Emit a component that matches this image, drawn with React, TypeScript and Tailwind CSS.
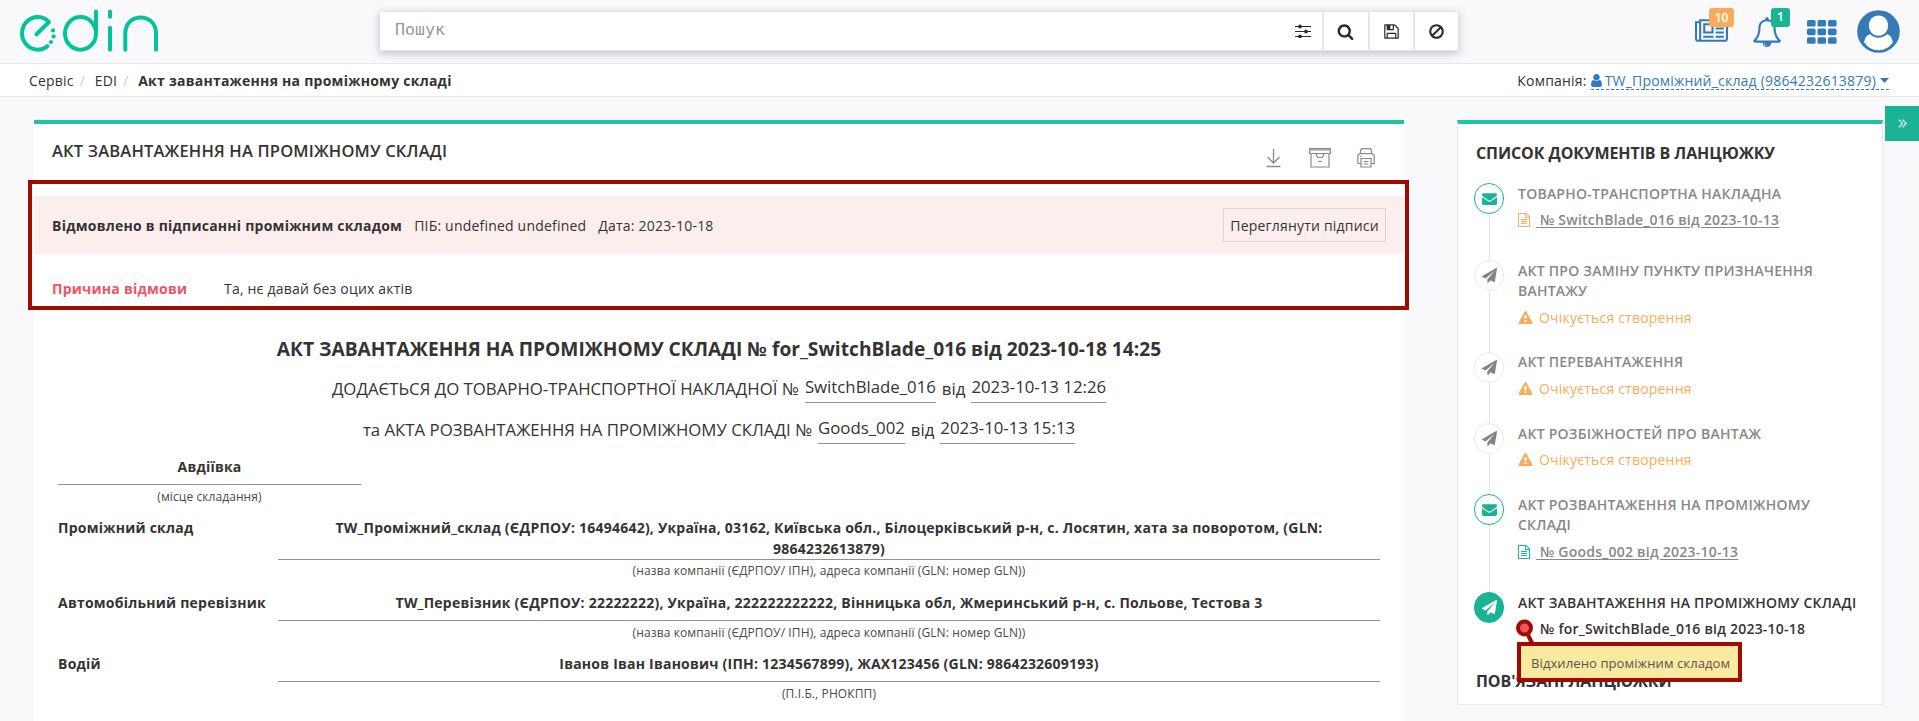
import React from 'react';

const PATHS = {
  user: 'M1536 1399q0 109-62.5 187t-150.5 78h-854q-88 0-150.5-78t-62.5-187q0-85 8.5-160.5t31.5-152 58.5-131 94-89 134.5-34.5q131 128 313 128t313-128q76 0 134.5 34.5t94 89 58.5 131 31.5 152 8.5 160.5zm-256-887q0 159-112.5 271.5t-271.5 112.5-271.5-112.5-112.5-271.5 112.5-271.5 271.5-112.5 271.5 112.5 112.5 271.5z',
  plane: 'M1764 11q33 24 27 64l-256 1536q-5 29-32 45-14 8-31 8-11 0-24-5l-453-185-242 295q-18 23-49 23-13 0-22-4-19-7-30.5-23.5t-11.5-36.5v-349l864-1059-1069 925-395-162q-37-14-40-55-2-40 32-59l1664-960q15-9 32-9 20 0 36 11z',
  envelope: 'M1792 710v794q0 66-47 113t-113 47h-1472q-66 0-113-47t-47-113v-794q44 49 101 87 362 246 497 345 57 42 92.5 65.5t94.5 48 110 24.5h2q51 0 110-24.5t94.5-48 92.5-65.5q170-123 498-345 57-39 100-87zm0-294q0 79-49 151t-122 123q-376 261-468 325-10 7-42.5 31t-54 38.5-52 32.5-57.5 27-50 9h-2q-23 0-50-9t-57.5-27-52-32.5-54-38.5-42.5-31q-91-64-262-182.5t-205-142.5q-62-42-117-115.5t-55-136.5q0-78 41.5-130t118.5-52h1472q65 0 112.5 47t47.5 113z',
  warning: 'M1024 1375v-190q0-14-9.5-23.5t-22.5-9.5h-192q-13 0-22.5 9.5t-9.5 23.5v190q0 14 9.5 23.5t22.5 9.5h192q13 0 22.5-9.5t9.5-23.5zm-2-374l18-459q0-12-10-19-13-11-24-11h-220q-11 0-24 11-10 7-10 21l17 457q0 10 10 16.5t24 6.5h185q14 0 23.5-6.5t10.5-16.5zm-14-934l768 1408q35 63-2 126-17 29-46.5 46t-63.5 17h-1536q-34 0-63.5-17t-46.5-46q-37-63-2-126l768-1408q17-31 47-49t65-18 65 18 47 49z',
  file: 'M1596 380q28 28 48 76t20 88v1152q0 40-28 68t-68 28h-1344q-40 0-68-28t-28-68v-1600q0-40 28-68t68-28h896q40 0 88 20t76 48zm-444-244v376h376q-10-29-22-41l-313-313q-12-12-41-22zm384 1528v-1024h-416q-40 0-68-28t-28-68v-416h-768v1536h1280zm-1024-864q0-14 9-23t23-9h704q14 0 23 9t9 23v64q0 14-9 23t-23 9h-704q-14 0-23-9t-9-23v-64zm736 224q14 0 23 9t9 23v64q0 14-9 23t-23 9h-704q-14 0-23-9t-9-23v-64q0-14 9-23t23-9h704zm0 256q14 0 23 9t9 23v64q0 14-9 23t-23 9h-704q-14 0-23-9t-9-23v-64q0-14 9-23t23-9h704z',
  floppy: 'M512 1536h768v-384h-768v384zm896 0h128v-896q0-14-10-38.5t-20-34.5l-281-281q-10-10-34-20t-39-10v416q0 40-28 68t-68 28h-576q-40 0-68-28t-28-68v-416h-128v1280h128v-416q0-40 28-68t68-28h832q40 0 68 28t28 68v416zm-384-928v-320q0-13-9.5-22.5t-22.5-9.5h-192q-13 0-22.5 9.5t-9.5 22.5v320q0 13 9.5 22.5t22.5 9.5h192q13 0 22.5-9.5t9.5-22.5zm640 32v928q0 40-28 68t-68 28h-1344q-40 0-68-28t-28-68v-1344q0-40 28-68t68-28h928q40 0 88 20t76 48l280 280q28 28 48 76t20 88z',
  search: 'M1216 832q0-185-131.5-316.5t-316.5-131.5-316.5 131.5-131.5 316.5 131.5 316.5 316.5 131.5 316.5-131.5 131.5-316.5zm512 832q0 52-38 90t-90 38q-54 0-90-38l-343-342q-179 124-399 124-143 0-273.5-55.5t-225-150-150-225-55.5-273.5 55.5-273.5 150-225 225-150 273.5-55.5 273.5 55.5 225 150 150 225 55.5 273.5q0 220-124 399l343 343q37 37 37 90z',
  ban: 'M1440 893q0-161-87-295l-754 753q137 89 297 89 111 0 211.5-43.5t173.5-116.5 116-174.5 43-212.5zm-999 299l755-754q-135-91-300-91-148 0-273 73t-198 199-73 274q0 162 89 299zm1223-299q0 157-61 300t-163.5 246-245 164-298.5 61-298.5-61-245-164-163.5-246-61-300 61-299.5 163.5-245.5 245-164 298.5-61 298.5 61 245 164 163.5 245.5 61 299.5z',
  newspaper: 'M1024 512h-384v384h384v-384zm128 640v128h-640v-128h640zm0-768v640h-640v-640h640zm640 768v128h-512v-128h512zm0-256v128h-512v-128h512zm0-256v128h-512v-128h512zm0-256v128h-512v-128h512zm-1536 960v-960h-128v960q0 26 19 45t45 19 45-19 19-45zm1664 0v-1088h-1536v1088q0 33-11 64h1483q26 0 45-19t19-45zm128-1216v1216q0 80-56 136t-136 56h-1664q-80 0-136-56t-56-136v-1088h256v-128h1792z',
  bell: 'M912 1696q0-16-16-16-59 0-101.5-42.5t-42.5-101.5q0-16-16-16t-16 16q0 73 51.5 124.5t124.5 51.5q16 0 16-16zm-666-288h1300q-266-300-266-832 0-51-24-105t-69-103-121.5-80.5-169.5-31.5-169.5 31.5-121.5 80.5-69 103-24 105q0 532-266 832zm1482 0q0 52-38 90t-90 38h-448q0 106-75 181t-181 75-181-75-75-181h-448q-52 0-90-38t-38-90q50-42 91-88t85-119.5 74.5-158.5 50-206 19.5-260q0-152 117-282.5t307-158.5q-8-19-8-39 0-40 28-68t68-28 68 28 28 68q0 20-8 39 190 28 307 158.5t117 282.5q0 139 19.5 260t50 206 74.5 158.5 85 119.5 91 88z',
};

function Icon({ name, className, viewBox = '0 0 1792 1792' }: { name: keyof typeof PATHS; className: string; viewBox?: string }) {
  return (
    <svg viewBox={viewBox} className={`shrink-0 fill-current ${className}`}>
      <path d={PATHS[name]} />
    </svg>
  );
}

function Logo() {
  return (
    <svg viewBox="0 0 160 64" className="h-[64px] w-[160px] shrink-0 fill-none stroke-[#00c59b] stroke-4" strokeLinecap="round" strokeLinejoin="round">
      <path d="M36.5 34.3L49 22A15.7 16.3 0 1 0 47.4 46.2" />
      <g className="fill-[#00c59b] stroke-none">
        <circle cx="53" cy="30.4" r="2.1" />
        <circle cx="53.6" cy="36.4" r="2.1" />
        <circle cx="51" cy="42" r="2.1" />
      </g>
      <ellipse cx="80.5" cy="33.4" rx="15.5" ry="16.3" />
      <path d="M96 11.5V33M110 11.5V16.8M110 27.8V49.8M125.3 49.8V33.5C125.3 12 156 12 156 33.5V49.8" />
    </svg>
  );
}

function Header() {
  return (
    <header className="flex h-[64px] items-center border-b border-[#e5e6e9] bg-[#f9f9fb]">
      <Logo />
      <div className="ml-[220px] flex h-[39px] w-[1078px] shrink-0 border-b border-[#e5e6e7] bg-white text-[#2b2b2b] shadow-[0_2px_8px_1px_rgba(60,70,110,0.28)]">
        <input
          placeholder="Пошук"
          className="min-w-0 flex-1 bg-transparent pb-[2px] pl-[15px] font-['DejaVu_Sans_Mono',monospace] text-[16.6px] outline-none placeholder:text-[#999]"
        />
        <div className="flex w-[38px] items-center justify-center">
          <svg viewBox="0 0 16 14" className="h-[14px] w-[16px] fill-none stroke-current">
            <path d="M0 2.5H16M0 7.5H16M0 12.5H16" strokeWidth="1.2" />
            <path d="M5 0.8V4.2M11 5.8V9.2M5 10.8V14" strokeWidth="3" />
          </svg>
        </div>
        <button className="flex w-[46px] items-center justify-center border-l-2 border-[#e5e6e7] pr-px">
          <Icon name="search" className="h-[17px] w-[17px]" />
        </button>
        <button className="flex w-[45px] items-center justify-center border-l-2 border-[#e5e6e7]">
          <Icon name="floppy" className="h-[17px] w-[17px]" />
        </button>
        <button className="flex w-[45px] items-center justify-center border-l-2 border-[#e5e6e7]">
          <Icon name="ban" className="h-[17px] w-[17px]" />
        </button>
      </div>
      <nav className="ml-auto flex h-full items-center pr-[19px] text-[#337ab7]">
        <div className="relative">
          <Icon name="newspaper" viewBox="0 0 2048 1792" className="h-[29px] w-[33px]" />
          <span className="absolute -top-[9px] left-[14px] flex h-[19px] w-[25px] items-center justify-center rounded-[3px] bg-[#f8ac59] text-xs font-semibold text-white">10</span>
        </div>
        <div className="relative ml-[24px]">
          <Icon name="bell" className="h-[30px] w-[30px]" />
          <span className="absolute -top-[9px] left-[19px] flex h-[19px] w-[19px] items-center justify-center rounded-[3px] bg-[#1ab394] text-xs font-semibold text-white">1</span>
        </div>
        <svg viewBox="0 0 30 24" className="ml-[25px] h-[24px] w-[30px] fill-current">
          {[0, 8.6, 17.2].map((y) =>
            [0, 10.5, 21].map((x) => <rect key={`${x}-${y}`} x={x} y={y} width="8.6" height="6.6" rx="1.6" />),
          )}
        </svg>
        <svg viewBox="0 0 43 43" className="ml-[20px] h-[43px] w-[43px]">
          <circle cx="21.5" cy="21.5" r="21.3" className="fill-[#337ab7]" />
          <path d="M21.5 5.5c5.6 0 9.6 4.3 9.6 10s-4 10.3-9.6 10.3-9.6-4.6-9.6-10.3 4-10 9.6-10z" className="fill-white" />
          <path d="M13.2 24.2c2.2 2.3 5 3.5 8.3 3.5s6.1-1.2 8.3-3.5c3.8.9 5.5 4.2 6 8.3-3 4.5-8.2 7.7-14.3 7.7s-11.3-3.2-14.3-7.7c.5-4.1 2.2-7.4 6-8.3z" className="fill-white" />
        </svg>
      </nav>
    </header>
  );
}

function Breadcrumbs() {
  return (
    <div className="flex h-[33px] items-center justify-between border-b border-[#e5e6e9] bg-white pt-px pr-[30px] pl-[29px] tracking-[0.2px]">
      <div className="flex whitespace-pre">
        <span>Сервіс</span>
        <span className="w-[21px] pl-[6px] text-[#ccc]">/</span>
        <span>EDI</span>
        <span className="w-[21px] pl-[6px] text-[#ccc]">/</span>
        <span className="font-bold tracking-[0.25px]">Акт завантаження на проміжному складі</span>
      </div>
      <div className="flex items-center">
        <span className="mr-1">Компанія:</span>
        <a className="flex h-[19px] items-center border-b border-dashed border-[#337ab7] text-[#337ab7]">
          <Icon name="user" viewBox="256 128 1280 1536" className="mr-[3px] h-[13px] w-[11px]" />
          TW_Проміжний_склад (9864232613879)
          <svg viewBox="0 0 9 5" className="ml-[4px] h-[5px] w-[9px] fill-current">
            <path d="M0 0H9L4.5 5z" />
          </svg>
        </a>
      </div>
    </div>
  );
}

function ToolIcons() {
  return (
    <div className="flex items-start gap-[26px] pt-[2px] text-[#8a8a8a]">
      <svg viewBox="0 0 16 20" className="mr-px h-[20px] w-[16px] fill-none stroke-current" strokeWidth="1.3">
        <path d="M7.5 1V14.5M1.5 9L7.5 15L13.5 9M0.5 18.5H14.5" />
      </svg>
      <svg viewBox="0 0 22 20" className="h-[20px] w-[22px] fill-none stroke-current" strokeWidth="1.2">
        <path d="M0.7 0.7H21.3V5.5H0.7zM2 5.5V19H20V5.5M0.7 2H21.3M7.5 6V8L9 9.5H13L14.5 8V6M9 13.5H13" />
      </svg>
      <svg viewBox="0 0 18 20" className="h-[20px] w-[18px] fill-none stroke-current" strokeWidth="1.2">
        <path d="M3.5 5.5V2L5 0.7H13L14.5 2V5.5M4 15.5H0.8V7.5L2.5 5.7H15.5L17.2 7.5V15.5H14M4 10.5H14V19H4zM6.5 13.5H11.5M6.5 16H11.5M2.7 8.5H4.5" />
      </svg>
    </div>
  );
}

function Field({ label, value, caption, tall = false }: { label: string; value: string; caption: string; tall?: boolean }) {
  return (
    <div className={`flex ${tall ? 'h-[75px]' : 'h-[61px]'}`}>
      <div className="w-[220px] shrink-0 leading-[21px] font-bold tracking-[0.23px]">{label}</div>
      <div className="flex-1 text-center">
        <div className={`flex justify-center border-b border-[#929396] ${tall ? 'h-[43px]' : 'h-[29px]'}`}>
          <p className="max-w-[1080px] leading-[21px] font-bold tracking-[0.225px]">{value}</p>
        </div>
        <p className={`text-xs leading-[18px] tracking-[0.11px] text-[#4a4a4a] ${tall ? 'pt-[2px]' : 'pt-[3px]'}`}>{caption}</p>
      </div>
    </div>
  );
}

function Underlined({ children }: { children: React.ReactNode }) {
  return <span className="mx-[6px] inline-flex h-[29px] items-start border-b border-[#929396] leading-[26px] last:mr-0">{children}</span>;
}

function DocumentCard() {
  return (
    <main className="h-[601px] w-[1370px] shrink-0 border-t-4 border-[#1fc5a2] bg-white">
      <div className="flex h-[72px] justify-between pt-[22px] pr-[29px] pl-[18px]">
        <h1 className="-mt-[6px] h-[22px] text-[16.5px] leading-[22px] font-semibold tracking-[0.18px]">АКТ ЗАВАНТАЖЕННЯ НА ПРОМІЖНОМУ СКЛАДІ</h1>
        <ToolIcons />
      </div>
      <section className="relative h-[112px] tracking-[0.2px]">
        <div className="pointer-events-none absolute -top-[16px] -right-[5px] -left-[6px] h-[130px] border-4 border-[#a00b00]" />
        <div className="flex h-[58px] items-center bg-[#fdeeee] px-[18px]">
          <span className="font-bold tracking-[0.235px]">Відмовлено в підписанні проміжним складом</span>
          <span className="ml-3">ПІБ: undefined undefined</span>
          <span className="ml-3">Дата: 2023-10-18</span>
          <button className="ml-auto h-[34px] w-[163px] border border-[#d8d8d8] whitespace-nowrap">Переглянути підписи</button>
        </div>
        <div className="flex px-[18px] pt-[24px] leading-[21px]">
          <span className="w-[172px] font-bold tracking-[0.235px] text-[#ed5565]">Причина відмови</span>
          <span>Та, нє давай без оцих актів</span>
        </div>
      </section>
      <section className="px-6">
        <h2 className="flex h-[61px] items-center justify-center pt-[22px] text-[19.2px] font-bold">
          АКТ ЗАВАНТАЖЕННЯ НА ПРОМІЖНОМУ СКЛАДІ № for_SwitchBlade_016 від 2023-10-18 14:25
        </h2>
        <div className="flex h-[41px] items-center justify-center pb-[2px] text-[16.8px]">
          ДОДАЄТЬСЯ ДО ТОВАРНО-ТРАНСПОРТНОЇ НАКЛАДНОЇ №<Underlined>SwitchBlade_016</Underlined>від<Underlined>2023-10-13 12:26</Underlined>
        </div>
        <div className="flex h-[41px] items-center justify-center pb-[2px] text-[16.8px]">
          та АКТА РОЗВАНТАЖЕННЯ НА ПРОМІЖНОМУ СКЛАДІ №<Underlined>Goods_002</Underlined>від<Underlined>2023-10-13 15:13</Underlined>
        </div>
        <div className="mb-[9px] h-[57px] w-[303px] pt-[5px] text-center">
          <p className="h-[29px] border-b border-[#929396] leading-[21px] font-bold tracking-[0.2px]">Авдіївка</p>
          <p className="pt-[3px] text-xs leading-[18px] tracking-[0.08px] text-[#4a4a4a]">(місце складання)</p>
        </div>
        <Field
          tall
          label="Проміжний склад"
          value="TW_Проміжний_склад (ЄДРПОУ: 16494642), Україна, 03162, Київська обл., Білоцерківський р-н, с. Лосятин, хата за поворотом, (GLN: 9864232613879)"
          caption="(назва компанії (ЄДРПОУ/ ІПН), адреса компанії (GLN: номер GLN))"
        />
        <Field
          label="Автомобільний перевізник"
          value="TW_Перевізник (ЄДРПОУ: 22222222), Україна, 222222222222, Вінницька обл, Жмеринський р-н, с. Польове, Тестова 3"
          caption="(назва компанії (ЄДРПОУ/ ІПН), адреса компанії (GLN: номер GLN))"
        />
        <Field label="Водій" value="Іванов Іван Іванович (ІПН: 1234567899), ЖАХ123456 (GLN: 9864232609193)" caption="(П.І.Б., РНОКПП)" />
      </section>
    </main>
  );
}

type Step = {
  title: string;
  height: string;
  kind: 'done' | 'pending' | 'current';
  gap?: string;
  inset?: string;
  link?: string;
  fileColor?: string;
};

const steps: Step[] = [
  { title: 'ТОВАРНО-ТРАНСПОРТНА НАКЛАДНА', height: 'h-[77px]', kind: 'done', link: '№ SwitchBlade_016 від 2023-10-13', fileColor: 'text-[#f8ac59]' },
  { title: 'АКТ ПРО ЗАМІНУ ПУНКТУ ПРИЗНАЧЕННЯ ВАНТАЖУ', height: 'h-[92px]', kind: 'pending', gap: 'mt-[7px]' },
  { title: 'АКТ ПЕРЕВАНТАЖЕННЯ', height: 'h-[71px]', kind: 'pending', gap: 'mt-[7px]', inset: 'pt-0' },
  { title: 'АКТ РОЗБІЖНОСТЕЙ ПРО ВАНТАЖ', height: 'h-[71px]', kind: 'pending' },
  { title: 'АКТ РОЗВАНТАЖЕННЯ НА ПРОМІЖНОМУ СКЛАДІ', height: 'h-[98px]', kind: 'done', gap: 'mt-[7px]', link: '№ Goods_002 від 2023-10-13', fileColor: 'text-[#1ab394]' },
  { title: 'АКТ ЗАВАНТАЖЕННЯ НА ПРОМІЖНОМУ СКЛАДІ', height: 'h-[78px]', kind: 'current', link: '№ for_SwitchBlade_016 від 2023-10-18' },
];

const circleStyles = {
  done: 'border-[#1ab394] bg-white text-[#1ab394]',
  pending: 'border-[#e7eaec] bg-white text-[#808488]',
  current: 'border-[#1ab394] bg-[#1ab394] text-white',
};

function TimelineStep({ title, height, kind, link, fileColor, gap = 'mt-[6px]', inset = 'pt-px' }: Step) {
  const current = kind === 'current';
  return (
    <li className={`flex ${height}`}>
      <div className="flex w-[30px] shrink-0 flex-col items-center">
        <span className={`flex h-[31px] w-[30px] items-center justify-center rounded-full border ${circleStyles[kind]}`}>
          <Icon name={kind === 'done' ? 'envelope' : 'plane'} className="h-[15px] w-[15px]" />
        </span>
        {!current && <span className="w-px flex-1 bg-[#e3e5e7]" />}
      </div>
      <div className={`ml-[14px] flex-1 leading-[20px] tracking-[0.24px] ${inset} ${current ? 'text-[#333]' : 'text-[#888]'}`}>
        <p className={`font-semibold ${current ? 'whitespace-nowrap' : 'max-w-[335px]'}`}>{title}</p>
        {kind === 'pending' && (
          <p className={`flex items-center tracking-[0.2px] text-[#f8ac59] ${gap}`}>
            <Icon name="warning" className="mr-[6px] h-[14px] w-[15px]" />
            Очікується створення
          </p>
        )}
        {kind === 'done' && (
          <p className={`flex items-center font-semibold ${gap}`}>
            <Icon name="file" viewBox="128 0 1536 1792" className={`mr-[6px] h-[14px] w-[12px] ${fileColor}`} />
            <a className="whitespace-pre underline underline-offset-2">{' '}{link}</a>
          </p>
        )}
        {current && (
          <div className={`relative ${gap}`}>
            <p className="pl-[22px] font-semibold tracking-[0.22px] whitespace-nowrap">{link}</p>
            <svg viewBox="0 0 20 26" className="absolute -top-[1px] -left-[3px] h-[26px] w-[20px]">
              <path d="M12 15L17 25" className="stroke-[#a00b00] stroke-[4]" />
              <circle cx="9.5" cy="10" r="6.5" className="fill-[#ed5565] stroke-[#a00b00] stroke-[4]" />
            </svg>
            <div className="absolute top-[23px] -left-[1px] flex h-[40px] w-[225px] items-center border-4 border-[#a00b00] bg-[#fce9a0] pt-[2px] pl-[10px] text-[13px] tracking-[0.1px] whitespace-nowrap text-[#555]">
              Відхилено проміжним складом
            </div>
          </div>
        )}
      </div>
    </li>
  );
}

function Sidebar() {
  return (
    <aside className="ml-[53px] h-[585px] w-[426px] shrink-0 border border-t-4 border-[#e7eaec] border-t-[#1fc5a2] bg-white px-4">
      <h2 className="h-[59px] pt-[18px] pl-[2px] text-[16px] leading-[22px] font-bold tracking-[-0.09px]">СПИСОК ДОКУМЕНТІВ В ЛАНЦЮЖКУ</h2>
      <ul className="relative z-10">
        {steps.map((s) => (
          <TimelineStep key={s.title} {...s} />
        ))}
      </ul>
      <h2 className="pl-[2px] text-[16px] leading-[22px] font-bold tracking-[-0.09px]">ПОВ'ЯЗАНІ ЛАНЦЮЖКИ</h2>
    </aside>
  );
}

export default function App() {
  return (
    <div className="h-[721px] overflow-hidden bg-[#f9f9fb] font-['Open_Sans',sans-serif] text-[14px] text-[#333]">
      <Header />
      <Breadcrumbs />
      <div className="flex pl-[34px]">
        <div className="flex pt-[23px]">
          <DocumentCard />
          <Sidebar />
        </div>
        <button className="mt-[9px] ml-auto flex h-[35px] w-[34px] items-center justify-center bg-[#1ab394] text-white">
          <svg viewBox="0 0 9 9" className="h-[9px] w-[9px] fill-none stroke-current" strokeWidth="1.2">
            <path d="M0.8 0.7L4.5 4.5L0.8 8.3M4.5 0.7L8.2 4.5L4.5 8.3" />
          </svg>
        </button>
      </div>
    </div>
  );
}
